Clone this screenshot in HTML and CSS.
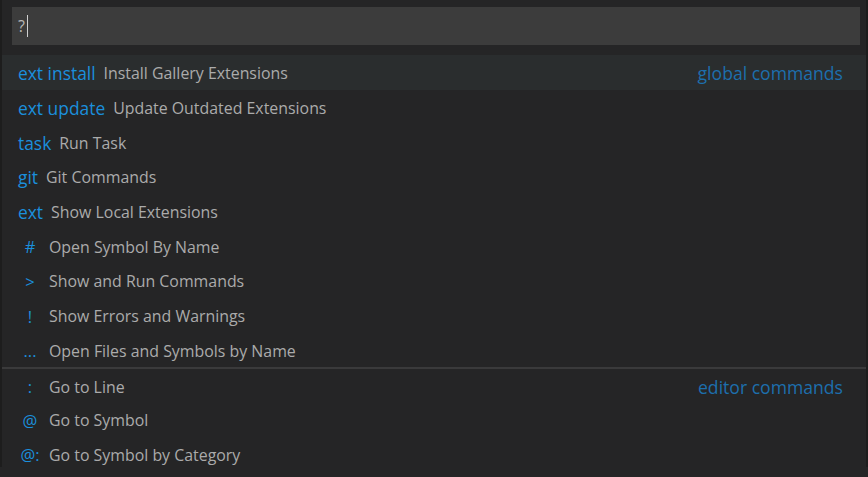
FILE: index.html
```html
<!DOCTYPE html>
<html>
<head>
<meta charset="utf-8">
<link rel="stylesheet" href="styles.css">
</head>
<body>
<div class="widget">
  <div class="input-wrap">
    <div class="input"><span class="query">?</span><span class="caret"></span></div>
  </div>
  <ul class="list">
    <li class="row selected"><span class="prefix">ext install</span><span class="label">Install Gallery Extensions</span><span class="group">global commands</span></li>
    <li class="row"><span class="prefix">ext update</span><span class="label">Update Outdated Extensions</span></li>
    <li class="row"><span class="prefix">task</span><span class="label">Run Task</span></li>
    <li class="row"><span class="prefix">git</span><span class="label">Git Commands</span></li>
    <li class="row"><span class="prefix">ext</span><span class="label">Show Local Extensions</span></li>
    <li class="row"><span class="prefix sym">#</span><span class="label">Open Symbol By Name</span></li>
    <li class="row"><span class="prefix sym">&gt;</span><span class="label">Show and Run Commands</span></li>
    <li class="row"><span class="prefix sym">!</span><span class="label">Show Errors and Warnings</span></li>
    <li class="row"><span class="prefix sym">...</span><span class="label">Open Files and Symbols by Name</span></li>
    <li class="row separated"><span class="prefix sym">:</span><span class="label">Go to Line</span><span class="group">editor commands</span></li>
    <li class="row"><span class="prefix sym">@</span><span class="label">Go to Symbol</span></li>
    <li class="row"><span class="prefix sym">@:</span><span class="label">Go to Symbol by Category</span></li>
  </ul>
</div>
</body>
</html>
```
FILE: styles.css
```css
html, body {
  margin: 0;
  padding: 0;
  background: #252526;
  height: 100%;
  overflow: hidden;
}

.widget {
  width: 864px;
  height: 467px;
  border-left: 2px solid #1d1d1d;
  border-right: 2px solid #1d1d1d;
  background: #252526;
  font-family: "Open Sans", "Noto Sans", sans-serif;
}

.input-wrap {
  padding: 7px 6px 0 10px;
}

.input {
  height: 38px;
  background: #3c3c3c;
  display: flex;
  align-items: center;
  padding-left: 6px;
}

.query {
  color: #b8b8b8;
  font-size: 16px;
}

.caret {
  width: 1px;
  height: 22px;
  background: #d0d0d0;
  margin-left: 2px;
}

.list {
  list-style: none;
  margin: 10px 0 0 0;
  padding: 0;
}

.row {
  height: 34.7px;
  display: flex;
  align-items: center;
  padding: 2px 23px 0 16px;
  box-sizing: border-box;
}

.row.selected {
  background: #2a2d2e;
}

.row.separated {
  border-top: 2px solid #3a3a3b;
}

.prefix {
  color: #1b8fdc;
  font-size: 17.4px;
  margin-right: 8px;
  white-space: nowrap;
}

.prefix.sym {
  width: 24px;
  text-align: center;
  margin-right: 7px;
  font-size: 16.5px;
}

.label {
  color: #ababab;
  font-size: 15.9px;
  white-space: nowrap;
}

.group {
  margin-left: auto;
  color: #1d6fad;
  font-size: 17.6px;
  white-space: nowrap;
}
```
